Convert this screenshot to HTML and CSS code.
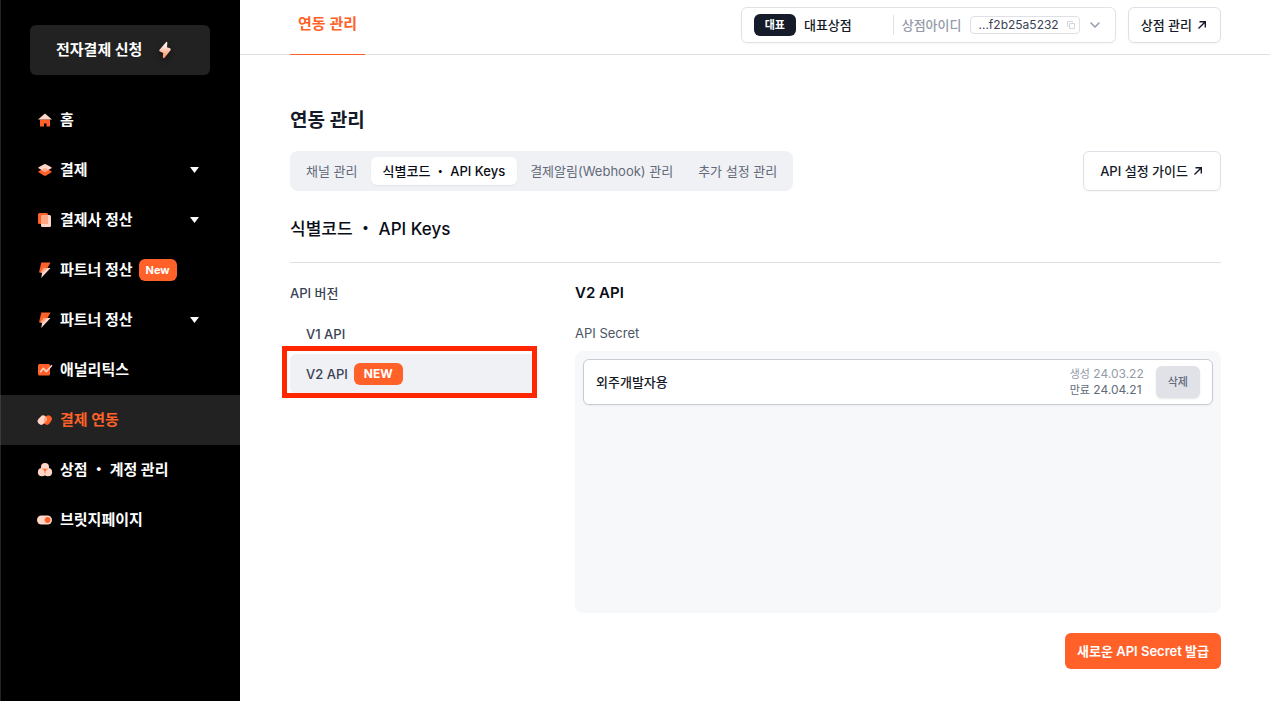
FILE: index.html
```html
<!DOCTYPE html>
<html lang="ko">
<head>
<meta charset="utf-8">
<meta name="viewport" content="width=device-width, initial-scale=1">
<title>연동 관리</title>
<link rel="stylesheet" href="styles.css">
</head>
<body>
<div class="app">
  <aside class="sidebar">
    <button class="apply" type="button">
      <span>전자결제 신청</span>
      <svg class="apply-icon" width="14" height="20" viewBox="0 0 14 20">
        <defs><linearGradient id="bolt" x1="0" y1="0" x2="0" y2="1"><stop offset="0.2" stop-color="#ffeee8"/><stop offset="1" stop-color="#ff8a5c"/></linearGradient></defs>
        <path d="M8 2.2Q9.4 1.2 9.3 3L9 7.2L12 8.200Q13.200 8.800 12.500 10.200L6.800 17.600Q5.200 19 4.800 17L5.200 12.900L2 11.600Q.7 10.900 1.500 9.700Z" fill="url(#bolt)"/>
      </svg>
    </button>
    <nav class="menu">
      <a class="menu-item" href="#">
        <svg class="icon" width="16" height="16" viewBox="0 0 16 16"><path d="M3 7.500h10v7H9.5v-3H7v3H3z" fill="#ff6129"/><path d="M8 1.500L15 7.500H1z" fill="#ffd6c8"/></svg>
        <span>홈</span>
      </a>
      <a class="menu-item" href="#">
        <svg class="icon" width="16" height="16" viewBox="0 0 16 16"><path d="M8 6L14.4 9.2Q15 9.8 14.4 10.3L8.8 13.7Q8 14 7.2 13.7L1.6 10.3Q1 9.8 1.6 9.2Z" fill="#ff6129"/><path d="M8.8 2.2L14.4 5.3Q15 5.8 14.4 6.3L8.8 9.6Q8 10 7.2 9.6L1.6 6.3Q1 5.8 1.6 5.3L7.2 2.2Q8 1.9 8.8 2.2Z" fill="#ffd6c8"/><path d="M8 6L11.6 7.9L8.8 9.6Q8 10 7.2 9.6L4.4 7.9Z" fill="#ffa786"/></svg>
        <span>결제</span>
        <span class="caret"></span>
      </a>
      <a class="menu-item" href="#">
        <svg class="icon" width="16" height="16" viewBox="0 0 16 16"><rect x="1" y="1" width="10" height="11" rx="1.5" fill="#ff6129"/><rect x="4" y="3" width="10" height="12" rx="1.5" fill="#ffd6c8"/><path d="M5.5 3H11v9H4V4.5Q4 3 5.500 3z" fill="#ffa786"/></svg>
        <span>결제사 정산</span>
        <span class="caret"></span>
      </a>
      <a class="menu-item" href="#">
        <svg class="icon" width="16" height="16" viewBox="0 0 16 16"><path d="M4.300 .5H13.500L10.500 6L6 10.500H2Z" fill="#ff6129"/><path d="M7 6H13.500L4.200 16L5.200 10.500H3.500Z" fill="#ffd6c8"/><path d="M7 6H10.500L6 10.500H3.500Z" fill="#ffa786"/></svg>
        <span>파트너 정산</span>
        <span class="badge">New</span>
      </a>
      <a class="menu-item" href="#">
        <svg class="icon" width="16" height="16" viewBox="0 0 16 16"><path d="M4.300 .5H13.500L10.500 6L6 10.500H2Z" fill="#ff6129"/><path d="M7 6H13.500L4.200 16L5.200 10.500H3.500Z" fill="#ffd6c8"/><path d="M7 6H10.500L6 10.500H3.500Z" fill="#ffa786"/></svg>
        <span>파트너 정산</span>
        <span class="caret"></span>
      </a>
      <a class="menu-item" href="#">
        <svg class="icon" width="16" height="16" viewBox="0 0 16 16"><rect x="1" y="2" width="12" height="11.500" rx="1.500" fill="#ff6129"/><path d="M3.200 10.300L6.300 6.300L9.300 9.600L15 3.300" fill="none" stroke="#ffd6c8" stroke-width="1.500"/></svg>
        <span>애널리틱스</span>
      </a>
      <a class="menu-item menu-item-active" href="#" aria-current="page">
        <svg class="icon" width="16" height="16" viewBox="0 0 16 16"><path d="M9.800 9.200L11.300 7" stroke="#ff6129" stroke-width="7" stroke-linecap="round"/><path d="M4.200 9.200L6.200 7" stroke="#ffd6c8" stroke-width="7" stroke-linecap="round"/><path d="M8.300 4.200L9.800 6.400Q10 8.500 7.300 11.400Q5.800 9 8.300 4.200Z" fill="#ffa786"/></svg>
        <span>결제 연동</span>
      </a>
      <a class="menu-item" href="#">
        <svg class="icon" width="16" height="16" viewBox="0 0 16 16"><circle cx="8" cy="5" r="4" fill="#ffd6c8"/><circle cx="5" cy="10.200" r="4.100" fill="#ffd6c8"/><circle cx="11" cy="10.200" r="4.100" fill="#ffd6c8"/><path d="M4.500 6.200Q8 6 9 9Q9 11.500 8 13Q7 11.500 7 9Q8 6 11.500 6.200Q11 8.600 8 9Q5 8.600 4.500 6.200Z" fill="#ffa786"/><path d="M6.300 6.700H9.700L8 9.800Z" fill="#ff6129"/></svg>
        <span>상점 ・ 계정 관리</span>
      </a>
      <a class="menu-item" href="#">
        <svg class="icon" width="16" height="16" viewBox="0 0 16 16"><rect x="0" y="3.500" width="15" height="9" rx="4.500" fill="#ffd6c8"/><circle cx="10.600" cy="8" r="2.900" fill="#ff6129"/></svg>
        <span>브릿지페이지</span>
      </a>
    </nav>
  </aside>

  <div class="page">
    <header class="topbar">
      <a class="top-tab" href="#">연동 관리</a>
      <div class="top-actions">
        <div class="store">
          <span class="store-tag">대표</span>
          <span class="store-name">대표상점</span>
          <span class="store-label">상점아이디</span>
          <button class="store-id" type="button" aria-label="상점아이디 복사">
            <span>...f2b25a5232</span>
            <svg width="8" height="8" viewBox="0 0 8 8" fill="none" stroke="#d3d6dc"><path d="M2.500 2.500h5v5h-5zM1.500 5.500h-1v-5h5v1"/></svg>
          </button>
          <button class="store-open" type="button" aria-label="상점 선택">
            <svg width="10" height="6" viewBox="0 0 10 6" fill="none" stroke="#949ba8" stroke-width="1.500" stroke-linecap="round" stroke-linejoin="round"><path d="M1 1l4 4 4-4"/></svg>
          </button>
        </div>
        <a class="outline-btn outline-btn-small" href="#">상점 관리
          <svg width="10" height="10" viewBox="0 0 10 10" fill="none" stroke="#161b29" stroke-width="1.400"><path d="M1.500 8.500L8.300 1.700M2.500 1.700h5.800v5.800"/></svg>
        </a>
      </div>
    </header>

    <main class="content">
      <h1 class="title">연동 관리</h1>
      <div class="tab-row">
        <nav class="tabs">
          <a class="tab" href="#">채널 관리</a>
          <a class="tab tab-active" href="#" aria-current="page">식별코드 ・ API Keys</a>
          <a class="tab" href="#">결제알림(Webhook) 관리</a>
          <a class="tab" href="#">추가 설정 관리</a>
        </nav>
        <a class="outline-btn" href="#">API 설정 가이드
          <svg width="10" height="10" viewBox="0 0 10 10" fill="none" stroke="#161b29" stroke-width="1.400"><path d="M1.500 8.500L8.300 1.700M2.500 1.700h5.800v5.800"/></svg>
        </a>
      </div>
      <h2 class="subtitle">식별코드 ・ API Keys</h2>
      <div class="columns">
        <section class="versions">
          <h3 class="versions-title">API 버전</h3>
          <a class="version" href="#">V1 API</a>
          <a class="version version-active" href="#" aria-current="true">V2 API <span class="badge badge-wide">NEW</span></a>
        </section>
        <section class="detail">
          <h3 class="detail-title">V2 API</h3>
          <p class="detail-label">API Secret</p>
          <div class="panel">
            <div class="secret">
              <span class="secret-name">외주개발자용</span>
              <div class="dates">
                <span class="created"><span class="date-label">생성</span> 24.03.22</span>
                <span><span class="date-label">만료</span> 24.04.21</span>
              </div>
              <button class="delete" type="button">삭제</button>
            </div>
          </div>
          <button class="issue" type="button">새로운 API Secret 발급</button>
        </section>
      </div>
    </main>
  </div>
</div>
</body>
</html>
```

FILE: styles.css
```css
* { box-sizing: border-box; }

body {
  margin: 0;
  background: #fff;
  color: #161b29;
  font-family: Inter, "Noto Sans CJK KR", sans-serif;
  font-size: 13px;
  line-height: 20px;
}

h1, h2, h3, p { margin: 0; }
a { color: inherit; text-decoration: none; }
button {
  margin: 0;
  padding: 0;
  border: 0;
  background: none;
  color: inherit;
  font: inherit;
  cursor: pointer;
}
svg { display: block; flex: none; }

.app { display: flex; min-height: 100vh; }

/* Sidebar */
.sidebar {
  flex: none;
  width: 240px;
  padding-top: 25px;
  background: #000;
  box-shadow: inset 1px 0 #242424;
  color: #fff;
  font-size: 15px;
  font-weight: 700;
}
.apply {
  display: flex;
  align-items: center;
  gap: 16px;
  width: 180px;
  height: 50px;
  margin: 0 30px 20px;
  padding: 0 26px;
  border-radius: 6px;
  background: #222;
}
.apply-icon { filter: drop-shadow(0 3px 3px rgba(0, 0, 0, 0.5)); }
.menu-item {
  display: flex;
  align-items: center;
  height: 50px;
  padding: 0 41px 0 37px;
}
.menu-item-active {
  background: #222;
  box-shadow: inset 1px 0 #3a3a3a;
  color: #ff6129;
}
.icon { margin-right: 7px; }
.caret {
  width: 9px;
  height: 6px;
  margin-left: auto;
  background: #fff;
  clip-path: polygon(0 0, 100% 0, 50% 100%);
}
.badge {
  margin-left: 6px;
  padding: 0 7px;
  border-radius: 6px;
  background: #ff6129;
  color: #fff;
  font-size: 11px;
  font-weight: 700;
  line-height: 22px;
}
.badge-wide { padding: 0 10px; font-size: 12px; }

/* Top bar */
.page { flex: 1; min-width: 0; }
.topbar {
  display: flex;
  justify-content: space-between;
  height: 55px;
  padding: 0 49px 0 50px;
  border-bottom: 1px solid #dfe0e6;
}
.top-tab {
  height: 55px;
  padding: 14px 8px 0;
  border-bottom: 1px solid #ff6129;
  color: #ff6129;
  font-size: 15px;
  font-weight: 600;
}
.top-actions {
  display: flex;
  align-items: flex-start;
  gap: 12px;
  padding-top: 7px;
}
.store {
  display: flex;
  align-items: center;
  width: 375px;
  height: 36px;
  padding: 0 13px 0 12px;
  border: 1px solid #e1e2e6;
  border-radius: 6px;
  box-shadow: 0 1px 2px rgba(0, 0, 0, 0.04);
}
.store-tag {
  padding: 0 11px;
  border-radius: 6px;
  background: #161b29;
  color: #fff;
  font-size: 11px;
  font-weight: 700;
  line-height: 22px;
}
.store-name { margin-left: 8px; font-weight: 500; }
.store-label {
  margin-left: auto;
  padding-left: 8px;
  border-left: 1px solid #e1e2e6;
  color: #949ba8;
  font-weight: 500;
}
.store-id {
  display: flex;
  align-items: center;
  gap: 8px;
  height: 18px;
  margin-left: 8px;
  padding: 0 4px 0 8px;
  border: 1px solid #dfe0e6;
  border-radius: 4px;
  color: #3a4354;
  font-size: 12px;
}
.store-open { margin-left: 8px; padding: 4px 2px; }

.outline-btn {
  display: flex;
  align-items: center;
  gap: 5px;
  height: 40px;
  padding: 0 17px 0 16px;
  border: 1px solid #dfe0e6;
  border-radius: 6px;
  box-shadow: 0 1px 2px rgba(0, 0, 0, 0.04);
  font-weight: 500;
}
.outline-btn-small { height: 36px; padding: 0 13px 0 12px; }

/* Content */
.content { padding: 51px 49px 32px 50px; }
.title {
  font-size: 19px;
  font-weight: 600;
  line-height: 30px;
}
.tab-row {
  display: flex;
  justify-content: space-between;
  margin-top: 15px;
}
.tabs {
  display: flex;
  align-items: center;
  gap: 1px;
  height: 40px;
  padding: 0 4px;
  border-radius: 8px;
  background: #f0f1f5;
  color: #626a79;
}
.tab {
  padding: 0 12px;
  border-radius: 6px;
  line-height: 28px;
}
.tab-active {
  background: #fff;
  box-shadow: 0 1px 2px rgba(0, 0, 0, 0.06);
  color: #0a0d17;
  font-weight: 500;
}
.subtitle {
  padding: 24px 0 19px;
  border-bottom: 1px solid #dfe0e6;
  color: #0a0d17;
  font-size: 17px;
  font-weight: 500;
  line-height: 28px;
}
.columns { display: flex; gap: 38px; }
.versions { flex: none; width: 247px; padding-top: 20px; }
.versions-title {
  margin-bottom: 11px;
  color: #3a4354;
  font-size: 13px;
  font-weight: 500;
}
.version {
  display: flex;
  align-items: center;
  height: 40px;
  padding: 0 16px;
  border-radius: 6px;
  color: #3a4354;
  font-weight: 500;
}
.version-active { position: relative; background: #f0f1f5; }
.version-active::after {
  content: "";
  position: absolute;
  inset: -8px 0 -4px -8px;
  border: 5px solid #ff2600;
}
.detail {
  flex: 1;
  display: flex;
  flex-direction: column;
  min-width: 0;
  padding-top: 20px;
}
.detail-title { color: #0a0d17; font-size: 15px; font-weight: 600; }
.detail-label { margin-top: 20px; color: #4b5465; }
.panel {
  min-height: 262px;
  margin-top: 8px;
  padding: 8px;
  border-radius: 8px;
  background: #f7f8fa;
}
.secret {
  display: flex;
  align-items: center;
  height: 46px;
  padding: 0 12px;
  border: 1px solid #c9ccd5;
  border-radius: 6px;
  background: #fff;
  box-shadow: 0 1px 2px rgba(0, 0, 0, 0.05);
}
.secret-name { font-weight: 500; }
.dates {
  display: flex;
  flex-direction: column;
  margin-left: auto;
  color: #626a79;
  font-size: 12px;
  line-height: 16px;
}
.date-label { font-size: 11px; }
.created { color: #949ba8; }
.delete {
  height: 32px;
  margin-left: 12px;
  padding: 0 12px;
  border-radius: 6px;
  background: #e1e2e8;
  box-shadow: 0 1px 2px rgba(0, 0, 0, 0.1);
  color: #626a79;
  font-size: 11px;
  font-weight: 500;
}
.issue {
  align-self: flex-end;
  height: 36px;
  margin-top: 20px;
  padding: 0 12px;
  border-radius: 6px;
  background: #ff6129;
  color: #fff;
  font-weight: 600;
}
```
